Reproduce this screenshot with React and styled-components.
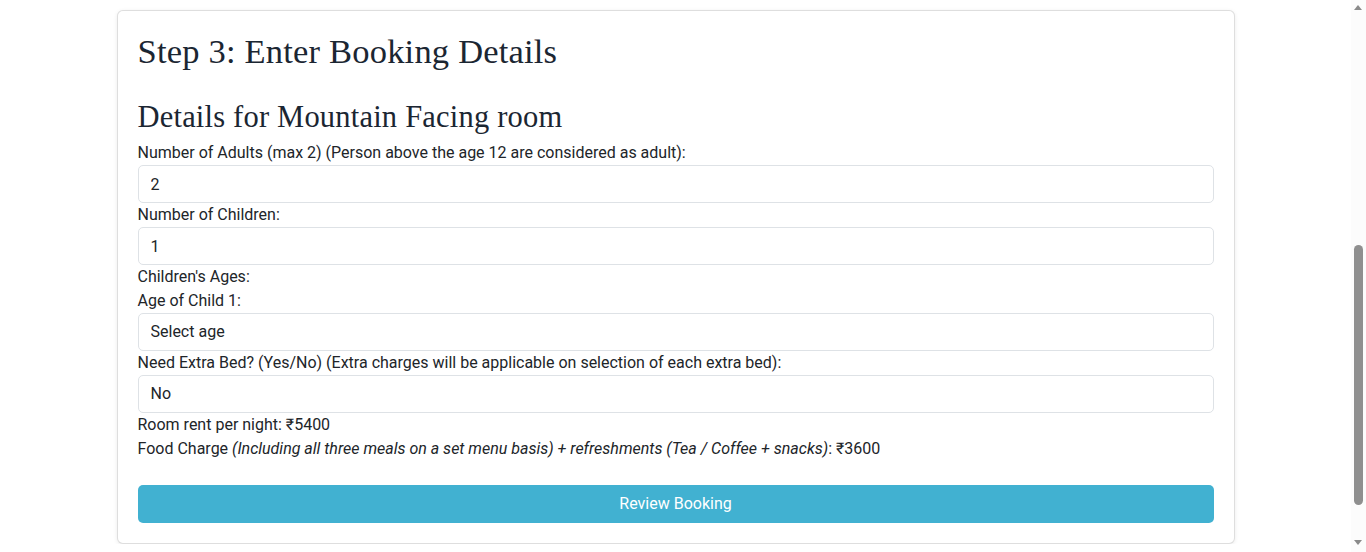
import React from 'react';
import styled, { createGlobalStyle } from 'styled-components';

const GlobalStyle = createGlobalStyle`
  body {
    margin: 0 15px 0 0;
    background: #fff;
    font-family: Roboto, "Liberation Sans", sans-serif;
    font-size: 16px;
    line-height: 1.5;
    color: #212529;
  }
`

const Container = styled.div`
  max-width: 1118px;
  margin: 0 auto;
  padding: 10px 12px 0;
`

const Card = styled.div`
  background: #fff;
  border: 1px solid rgba(0, 0, 0, 0.13);
  border-radius: 6px;
  box-shadow: 0 1px 4px rgba(0, 0, 0, 0.08);
  padding: 20px;
`

const Title = styled.h1`
  font-family: "Liberation Serif", "DejaVu Serif", serif;
  font-weight: 400;
  font-size: ${props => props.size}px;
  line-height: ${props => props.lh}px;
  color: #1b2632;
  margin: ${props => props.margin};
  letter-spacing: 0.2px;
`

const Label = styled.label`
  display: block;
  margin: 0;
`

const Field = styled.input`
  display: block;
  width: 100%;
  box-sizing: border-box;
  height: 38px;
  padding: 6px 12px;
  font: inherit;
  color: #212529;
  background: #fff;
  border: 1px solid #dee2e6;
  border-radius: 5px;
  outline: none;
`

const Select = styled.select`
  display: block;
  width: 100%;
  box-sizing: border-box;
  height: 38px;
  padding: 6px 12px;
  font: inherit;
  color: #212529;
  background: #fff;
  border: 1px solid #dee2e6;
  border-radius: 5px;
  appearance: none;
  outline: none;
`

const Line = styled.div`
  margin: 0;
`

const Button = styled.button`
  display: block;
  width: 100%;
  height: 38px;
  margin-top: 24px;
  font: inherit;
  color: #fff;
  background: #41b1d1;
  border: none;
  border-radius: 5px;
  cursor: pointer;
`

// the browser scrollbar seen at the right edge of the screenshot
const ScrollTrack = styled.div`
  position: fixed;
  top: 0;
  right: 0;
  width: 15px;
  height: 100%;
  background: #fcfcfc;
`

const Arrow = styled.div`
  position: absolute;
  left: 3px;
  ${props => props.down ? 'bottom: 7px;' : 'top: 5px;'}
  width: 0;
  height: 0;
  border-left: 4.5px solid transparent;
  border-right: 4.5px solid transparent;
  ${props => props.down
    ? 'border-top: 5px solid #8a8a8a;'
    : 'border-bottom: 5px solid #8a8a8a;'}
`

const Thumb = styled.div`
  position: absolute;
  left: 3px;
  top: 245px;
  width: 9px;
  height: 260px;
  border-radius: 5px;
  background: #8f8f8f;
`

export default function App() {
  return (
    <>
      <GlobalStyle />
      <Container>
        <Card>
          <Title size={34.5} lh={41} margin="0 0 28px">Step 3: Enter Booking Details</Title>
          <Title as="h2" size={30.5} lh={34} margin="0 0 7px">Details for Mountain Facing room</Title>

          <Label>Number of Adults (max 2) (Person above the age 12 are considered as adult):</Label>
          <Field type="number" defaultValue="2" />

          <Label>Number of Children:</Label>
          <Field type="number" defaultValue="1" />

          <Line>Children's Ages:</Line>
          <Label>Age of Child 1:</Label>
          <Select defaultValue="">
            <option value="">Select age</option>
          </Select>

          <Label>Need Extra Bed? (Yes/No) (Extra charges will be applicable on selection of each extra bed):</Label>
          <Select defaultValue="no">
            <option value="no">No</option>
            <option value="yes">Yes</option>
          </Select>

          <Line>Room rent per night: ₹5400</Line>
          <Line>
            Food Charge <i>(Including all three meals on a set menu basis) + refreshments (Tea / Coffee + snacks)</i>: ₹3600
          </Line>

          <Button>Review Booking</Button>
        </Card>
      </Container>
      <ScrollTrack>
        <Arrow />
        <Thumb />
        <Arrow down />
      </ScrollTrack>
    </>
  );
}
